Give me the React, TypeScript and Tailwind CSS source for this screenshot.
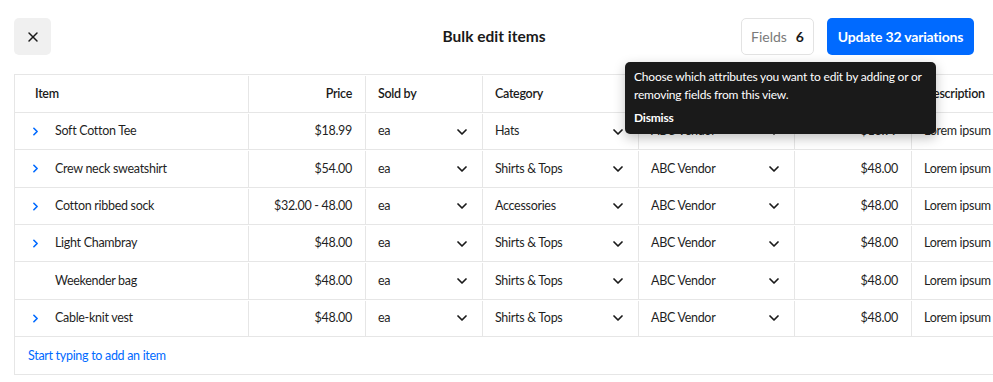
import { ChevronDown, ChevronRight, X } from "lucide-react";

const ROWS = [
  { name: "Soft Cotton Tee", price: "$18.99", category: "Hats", price2: "$18.99", expand: true },
  { name: "Crew neck sweatshirt", price: "$54.00", category: "Shirts & Tops", price2: "$48.00", expand: true },
  { name: "Cotton ribbed sock", price: "$32.00 - 48.00", category: "Accessories", price2: "$48.00", expand: true },
  { name: "Light Chambray", price: "$48.00", category: "Shirts & Tops", price2: "$48.00", expand: true },
  { name: "Weekender bag", price: "$48.00", category: "Shirts & Tops", price2: "$48.00", expand: false },
  { name: "Cable-knit vest", price: "$48.00", category: "Shirts & Tops", price2: "$48.00", expand: true },
];

const cell = "flex items-center border-r border-[#e6e6e6] shrink-0";

const Select = ({ value, width }: { value: string; width: string }) => (
  <div className={`${cell} ${width} justify-between pl-3 pr-[12px]`}>
    <span>{value}</span>
    <ChevronDown size={16} strokeWidth={2.6} className="text-[#1a1a1a]" />
  </div>
);

export default function App() {
  return (
    <div
      className="relative h-[382px] w-[993px] overflow-hidden bg-white text-[12.5px] tracking-[-0.3px] text-[#1f1f1f]"
      style={{ fontFamily: "Lato, 'Noto Sans', sans-serif" }}
    >
      <header className="flex h-[74px] items-start px-[14px] pt-[18px]">
        <button className="grid h-[37px] w-[37px] place-items-center rounded-[5px] bg-[#f0f0f0]">
          <X size={16} strokeWidth={2.2} className="text-[#1a1a1a]" />
        </button>
        <h1 className="flex h-[38px] flex-1 items-center justify-center pl-[196px] text-[15.5px] font-bold tracking-normal text-[#1a1a1a]">
          Bulk edit items
        </h1>
        <div className="flex gap-[13px] pr-[5px]">
          <button className="flex h-[37px] w-[73px] items-center justify-center gap-[9px] rounded-[5px] border border-[#e3e3e3] text-[14px] tracking-normal">
            <span className="text-[#7a7a7a]">Fields</span>
            <span className="font-bold text-[#1a1a1a]">6</span>
          </button>
          <button className="h-[37px] w-[147px] rounded-[5px] bg-[#006aff] text-[14px] font-bold tracking-[-0.2px] text-white">
            Update 32 variations
          </button>
        </div>
      </header>

      <div className="ml-[14px] w-[1120px] border-l border-t border-[#e6e6e6]">
        <div className="flex h-[38px] border-b border-[#e6e6e6] pt-px font-semibold text-[#1a1a1a]">
          <div className={`${cell} w-[234px] pl-5`}>Item</div>
          <div className={`${cell} w-[117px] justify-end pr-[13px]`}>Price</div>
          <div className={`${cell} w-[117px] pl-3`}>Sold by</div>
          <div className={`${cell} w-[156px] pl-3`}>Category</div>
          <div className={`${cell} w-[156px] pl-3`}>Vendor</div>
          <div className={`${cell} w-[117px] justify-end pr-[13px]`}>Price</div>
          <div className={`${cell} w-[220px] pl-3`}>Description</div>
        </div>

        {ROWS.map((row) => (
          <div key={row.name} className="flex h-[37.33px] border-b border-[#e6e6e6] pt-px">
            <div className={`${cell} w-[234px] pl-[14px]`}>
              <span className="flex w-[26px]">
                {row.expand && <ChevronRight size={13} strokeWidth={3} className="text-[#006aff]" />}
              </span>
              <span>{row.name}</span>
            </div>
            <div className={`${cell} w-[117px] justify-end pr-[13px]`}>{row.price}</div>
            <Select value="ea" width="w-[117px]" />
            <Select value={row.category} width="w-[156px]" />
            <Select value="ABC Vendor" width="w-[156px]" />
            <div className={`${cell} w-[117px] justify-end pr-[13px]`}>{row.price2}</div>
            <div className={`${cell} w-[220px] pl-3`}>Lorem ipsum dolor sit</div>
          </div>
        ))}

        <div className="flex h-[38px] items-center border-b border-[#e6e6e6] pl-[13px] pt-px text-[#006aff]">
          Start typing to add an item
        </div>
      </div>

      <div className="absolute left-[625px] top-[62px] w-[311px] rounded-[5px] bg-[#1a1a1a] px-[9px] pb-[7px] pt-[6px] text-[12px] leading-[18px] tracking-[-0.2px] text-white shadow-[0_4px_12px_rgba(0,0,0,0.25)]">
        <p>Choose which attributes you want to edit by adding or or removing fields from this view.</p>
        <p className="mt-[5px] font-bold">Dismiss</p>
      </div>
    </div>
  );
}
